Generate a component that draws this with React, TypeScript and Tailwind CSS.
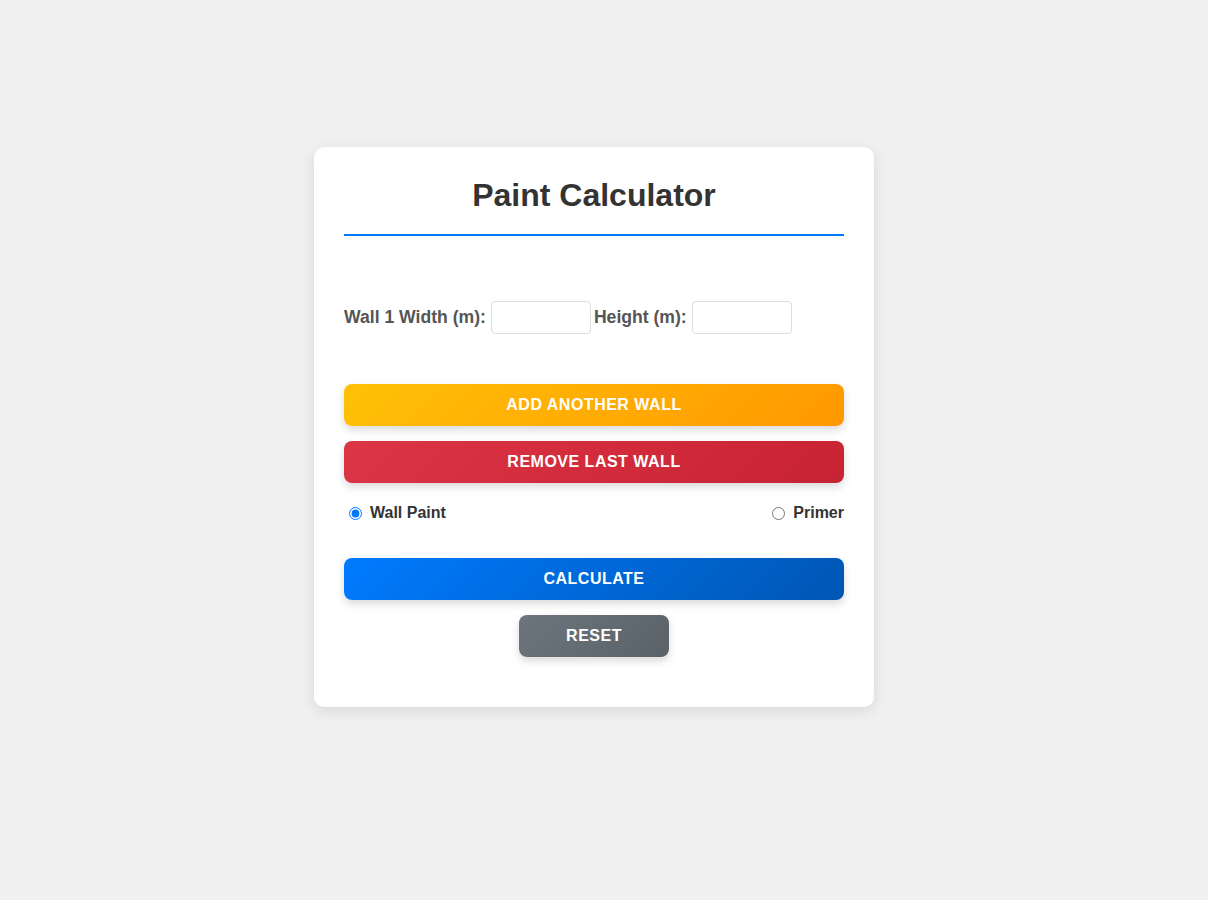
import React, { useState } from 'react';

const App: React.FC = () => {
  const [paintType, setPaintType] = useState<'wall' | 'primer'>('wall');

  const btn =
    'block h-[42px] w-full rounded-lg text-[16px] font-bold uppercase tracking-[0.5px] text-white shadow-[0_4px_8px_rgba(0,0,0,0.15)]';

  return (
    <div className="min-h-screen bg-[#f0f0f0] pt-[147px] pl-[314px]" style={{ fontFamily: '"Liberation Sans", Arial, sans-serif' }}>
      <div className="w-[560px] rounded-[10px] bg-white p-[30px] pb-[50px] shadow-[0_4px_14px_rgba(0,0,0,0.1)]">
        <h1 className="border-b-2 border-[#007bff] pb-5 text-center text-[32px] font-bold leading-[37px] text-[#333]">
          Paint Calculator
        </h1>

        <div className="mt-[65px] flex h-[33px] items-center text-[17.6px] font-bold text-[#555]">
          <label>Wall 1 Width (m):</label>
          <input type="number" className="ml-[5px] h-[33px] w-[100px] rounded border border-[#ddd] px-2 text-[16px]" />
          <label className="ml-[3px]">Height (m):</label>
          <input type="number" className="ml-[5px] h-[33px] w-[100px] rounded border border-[#ddd] px-2 text-[16px]" />
        </div>

        <button className={`${btn} mt-[50px] bg-[linear-gradient(135deg,#ffc107,#ff9800)]`}>Add Another Wall</button>
        <button className={`${btn} mt-[15px] bg-[linear-gradient(135deg,#dc3545,#c82333)]`}>Remove Last Wall</button>

        <div className="mt-[21px] flex h-[18px] items-center justify-between text-[16px] font-bold text-[#333]">
          <label className="flex items-center">
            <input
              type="radio"
              name="paint"
              checked={paintType === 'wall'}
              onChange={() => setPaintType('wall')}
              className="ml-[5px] mr-[8px] h-[13px] w-[13px]"
            />
            Wall Paint
          </label>
          <label className="flex items-center">
            <input
              type="radio"
              name="paint"
              checked={paintType === 'primer'}
              onChange={() => setPaintType('primer')}
              className="mr-[8px] h-[13px] w-[13px]"
            />
            Primer
          </label>
        </div>

        <button className={`${btn} mt-[36px] bg-[linear-gradient(135deg,#007bff,#0056b3)]`}>Calculate</button>
        <button className={`${btn} mx-auto mt-[15px] !w-[150px] bg-[linear-gradient(135deg,#6c757d,#5a6268)]`}>Reset</button>
      </div>
    </div>
  );
};

export default App;
